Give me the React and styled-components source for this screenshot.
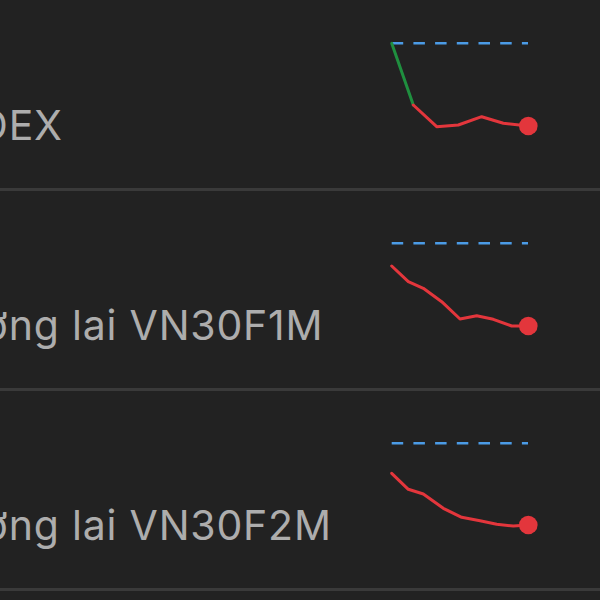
import React from 'react';
import styled, { createGlobalStyle } from 'styled-components';

const GlobalStyle = createGlobalStyle`
  html, body {
    margin: 0;
    padding: 0;
    background: #222222;
  }
  body {
    font-family: Inter, "Noto Sans", sans-serif;
    overflow: hidden;
  }
`;

const Screen = styled.div`
  width: 600px;
  height: 600px;
  overflow: hidden;
  background: #222222;
`;

// the view is scrolled: the list starts left of the visible area
const List = styled.ul`
  list-style: none;
  margin: -9px 0 0 -265px;
  padding: 0;
`;

const Row = styled.li`
  height: 200px;
  box-sizing: border-box;
  border-bottom: 3px solid #3a3a3a;
  display: flex;
  align-items: flex-start;
  padding-right: 60px;
`;

const Info = styled.div`
  flex: 1;
  min-width: 0;
  height: 100%;
  display: flex;
  flex-direction: column;
  justify-content: flex-end;
  padding-bottom: 38px;
  box-sizing: border-box;
`;

const Title = styled.div`
  font-size: 44px;
  font-weight: 700;
  line-height: 52px;
  color: #f2f2f2;
  white-space: nowrap;
`;

const Desc = styled.div`
  font-size: 41px;
  line-height: 50px;
  letter-spacing: 0.8px;
  color: #adadad;
  white-space: nowrap;
`;

const Chart = styled.svg`
  flex: none;
  width: 160px;
  height: 140px;
  margin-top: 30px;
`;

const GREEN = '#1f8f3f';
const RED = '#e3363c';
const BLUE = '#4b9be6';

function Sparkline({ up = [], down }) {
  const toStr = (pts) => pts.map((p) => p.join(',')).join(' ');
  const last = down[down.length - 1];
  return (
    <Chart viewBox="0 0 160 140">
      <line x1="11.7" y1="22.3" x2="148" y2="22.3" stroke={BLUE} strokeWidth="2.6" strokeDasharray="11.5 10.2" />
      {up.length > 0 && (
        <polyline points={toStr(up)} fill="none" stroke={GREEN} strokeWidth="3" strokeLinejoin="round" strokeLinecap="round" />
      )}
      <polyline points={toStr(down)} fill="none" stroke={RED} strokeWidth="3" strokeLinejoin="round" strokeLinecap="round" />
      <circle cx={last[0]} cy={last[1]} r="9.3" fill={RED} />
    </Chart>
  );
}

const items = [
  {
    title: 'VNINDEX',
    desc: 'Chỉ số VNINDEX',
    up: [[11.7, 22.3], [33.3, 84]],
    down: [[33.3, 84], [56.7, 105.7], [78.3, 104], [101.7, 95.7], [123.3, 102.3], [148.3, 105]],
  },
  {
    title: 'VN30F1M',
    desc: 'Hợp đồng tương lai VN30F1M',
    down: [[11.7, 45], [28.3, 60.7], [43.3, 67.3], [61.7, 80.7], [80, 98], [96.7, 94.7], [113.3, 98.3], [131.7, 105], [148.3, 105]],
  },
  {
    title: 'VN30F2M',
    desc: 'Hợp đồng tương lai VN30F2M',
    down: [[11.7, 52.3], [28.3, 68.3], [43.3, 73], [63.3, 87.3], [81.7, 96.3], [100, 99.7], [116.7, 103.3], [133.3, 105], [148.3, 104]],
  },
];

export default function App() {
  return (
    <>
      <GlobalStyle />
      <Screen>
        <List>
          {items.map((item) => (
            <Row key={item.title}>
              <Info>
                <Title>{item.title}</Title>
                <Desc>{item.desc}</Desc>
              </Info>
              <Sparkline up={item.up} down={item.down} />
            </Row>
          ))}
        </List>
      </Screen>
    </>
  );
}
